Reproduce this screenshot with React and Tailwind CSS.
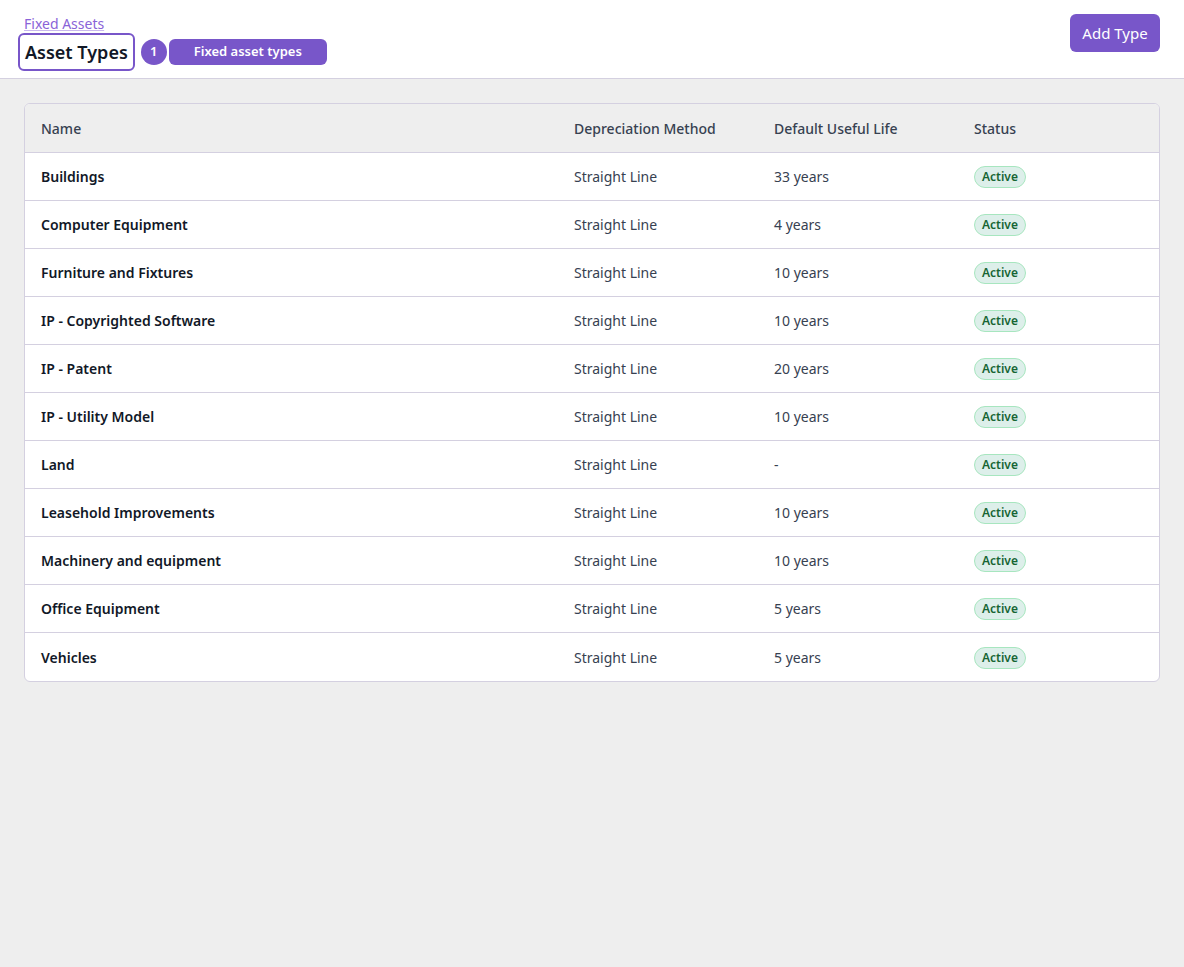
const rows = [
  ["Buildings", "33 years"],
  ["Computer Equipment", "4 years"],
  ["Furniture and Fixtures", "10 years"],
  ["IP - Copyrighted Software", "10 years"],
  ["IP - Patent", "20 years"],
  ["IP - Utility Model", "10 years"],
  ["Land", "-"],
  ["Leasehold Improvements", "10 years"],
  ["Machinery and equipment", "10 years"],
  ["Office Equipment", "5 years"],
  ["Vehicles", "5 years"],
];

export default function App() {
  return (
    <div className="min-h-[967px] bg-[#eeeeee] font-['Inter',sans-serif]">
      <div className="h-[79px] bg-white border-b border-[#d4d0e0] flex items-start justify-between pl-[18px] pr-[24px]">
        <div className="flex flex-col pt-[14px]">
          <a className="ml-[6px] text-[14px] leading-[19px] text-[#8a63d8] underline decoration-[#c9b8ee]">Fixed Assets</a>
          <div className="flex items-center gap-[6px]">
            <div className="h-[38px] px-[5px] border-2 border-[#7856c9] rounded-[6px] flex items-center text-[18px] font-semibold text-[#111827]">Asset Types</div>
            <div className="flex items-center gap-[2px]">
              <span className="w-[26px] h-[26px] rounded-full bg-[#7856c9] text-white text-[13px] font-semibold flex items-center justify-center">1</span>
              <span className="w-[158px] h-[26px] rounded-[6px] bg-[#7856c9] text-white text-[13px] font-semibold flex items-center justify-center">Fixed asset types</span>
            </div>
          </div>
        </div>
        <button className="mt-[14px] h-[38px] w-[90px] rounded-[6px] bg-[#7856c9] text-white text-[15px]">Add Type</button>
      </div>
      <div className="px-[24px] pt-[24px]">
        <div className="w-[1136px] bg-white border border-[#d4d0e0] rounded-[6px] overflow-hidden font-['Noto_Sans',sans-serif] text-[14px]">
          <div className="h-[49px] bg-[#eeeeee] border-b border-[#d4d0e0] flex items-center text-[#374151] font-medium">
            <div className="w-[549px] pl-[16px]">Name</div>
            <div className="w-[200px]">Depreciation Method</div>
            <div className="w-[200px]">Default Useful Life</div>
            <div>Status</div>
          </div>
          {rows.map(([n, l], i) => (
            <div key={n} className={`h-[48px] flex items-center text-[#374151] ${i < rows.length - 1 ? "border-b border-[#d4d0e0]" : "h-[47px]"}`}>
              <div className="w-[549px] pl-[16px] font-semibold text-[#111827]">{n}</div>
              <div className="w-[200px]">Straight Line</div>
              <div className="w-[200px]">{l}</div>
              <div>
                <span className="inline-flex items-center h-[22px] px-[7px] rounded-full bg-[#ddefea] border border-[#a7e6bf] text-[#166534] text-[12px] font-semibold">Active</span>
              </div>
            </div>
          ))}
        </div>
      </div>
    </div>
  );
}
